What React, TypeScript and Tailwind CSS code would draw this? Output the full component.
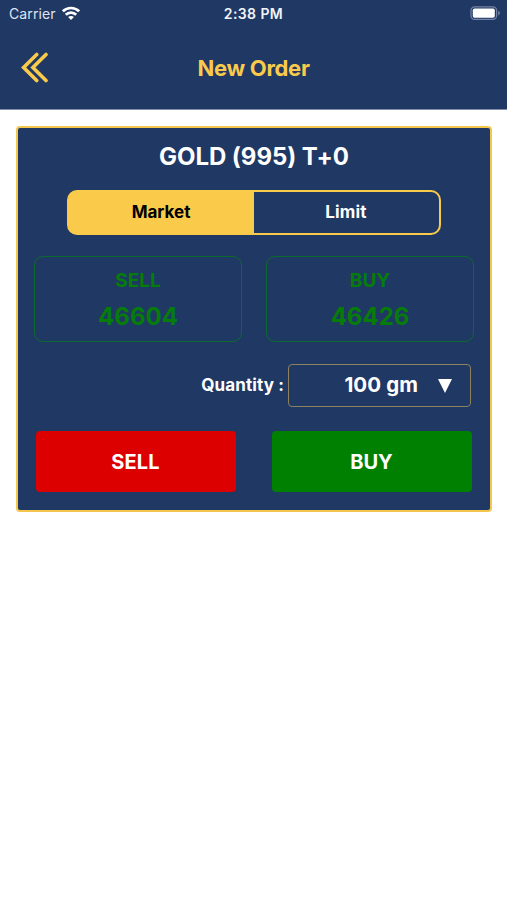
const StatusBar = () => (
  <div className="flex h-7 items-center justify-between pr-[7px] pl-[9px] text-white">
    <div className="flex w-[158px] items-center gap-[6px]">
      <span className="-mt-0.5 text-[14px] tracking-[0.12px] text-[#dfe5f2]">Carrier</span>
      <svg width="18" height="14" viewBox="0 0 18 14" fill="none" stroke="currentColor" strokeWidth="2.7" className="-mt-0.5">
        <path d="M0.9 5.3C5.4 0.9 12.6 0.9 17.1 5.3" />
        <path d="M3.8 8.7C6.7 5.8 11.3 5.8 14.2 8.7" />
        <path d="M9 14L6.1 11.1C7.7 9.6 10.3 9.6 11.9 11.1Z" fill="currentColor" stroke="none" />
      </svg>
    </div>
    <span className="-mt-px text-[14px] font-semibold tracking-[0.4px] text-[#f0f3fa]">2:38 PM</span>
    <div className="flex w-40 justify-end">
      <svg width="30" height="14" viewBox="0 0 30 14" fill="none" className="-mt-0.5">
        <rect x="1" y="0.8" width="25.6" height="12.6" rx="3.6" stroke="#7483a6" strokeWidth="1.2" />
        <rect x="2.8" y="2.5" width="22" height="9.2" rx="1.8" fill="white" />
        <path d="M28.2 4.8C30.4 5.6 30.4 8.6 28.2 9.4Z" fill="#7483a6" />
      </svg>
    </div>
  </div>
);

const Header = () => (
  <header className="h-[110px] border-b border-[#8290ab] bg-[#203864]">
    <StatusBar />
    <div className="grid h-20 grid-cols-[60px_1fr_60px] items-center">
      <button type="button" aria-label="Back" className="pl-5">
        <svg
          width="30"
          height="32"
          viewBox="0 0 30 32"
          fill="none"
          stroke="#facb4b"
          strokeWidth="3.6"
          strokeLinecap="round"
          strokeLinejoin="miter"
        >
          <path d="M16.7 2.4L3.6 15.5L16.7 28.6" />
          <path d="M26 2.4L12.9 15.5L26 28.6" />
        </svg>
      </button>
      <h1 className="text-center text-[22px] font-bold tracking-[-0.3px] text-[#facb4b]">New Order</h1>
    </div>
  </header>
);

const PriceBox = ({ label, price }: { label: string; price: string }) => (
  <div className="flex h-[86px] w-[208px] flex-col items-center rounded-[9px] border border-[#0d6a2c] pt-[6px] text-[#067c0b]">
    <span className="text-[19px] leading-[35px] font-bold">{label}</span>
    <span className="text-[24px] leading-[37px] font-bold">{price}</span>
  </div>
);

export default function App() {
  return (
    <div className="min-h-[900px] w-[507px] bg-white font-['Inter',sans-serif]">
      <Header />
      <main className="px-4 pt-4 pr-[15px]">
        <section className="h-[386px] rounded-[4px] border-2 border-[#f4c64d] bg-[#203864] text-white">
          <h2 className="mb-1 text-center text-[24px] leading-[58px] font-bold tracking-[-0.05px]">GOLD (995) T+0</h2>
          <div className="mx-auto flex h-[45px] w-[374px] overflow-hidden rounded-[10px] border-2 border-[#facb4b] bg-[linear-gradient(to_right,#facb4b_50%,transparent_50%)] text-[17px] font-bold">
            <button type="button" className="flex-1 pr-px text-black">
              Market
            </button>
            <button type="button" className="flex-1 pr-px tracking-[0.2px]">
              Limit
            </button>
          </div>
          <div className="mt-[21px] flex justify-between px-4">
            <PriceBox label="SELL" price="46604" />
            <PriceBox label="BUY" price="46426" />
          </div>
          <div className="mt-[22px] flex items-center justify-end gap-1 pr-[19px]">
            <span className="text-[17px] font-bold tracking-[0.12px]">Quantity :</span>
            <button
              type="button"
              className="flex h-[43px] w-[183px] items-center justify-end rounded-[4px] border border-[#8d8260] pr-[18px]"
            >
              <span className="mr-5 text-[20.5px] font-bold tracking-[0.1px]">100 gm</span>
              <svg width="14" height="14" viewBox="0 0 14 14" fill="white">
                <path d="M0 0H14L7 14Z" />
              </svg>
            </button>
          </div>
          <div className="mt-6 flex justify-between pr-[18px] pl-[18px] text-[20px] font-bold">
            <button type="button" className="h-[61px] w-[200px] rounded-[4px] bg-[#dd0000] pr-px tracking-[0.2px]">
              SELL
            </button>
            <button type="button" className="h-[61px] w-[200px] rounded-[4px] bg-[#008000] pr-px">
              BUY
            </button>
          </div>
        </section>
      </main>
    </div>
  );
}
